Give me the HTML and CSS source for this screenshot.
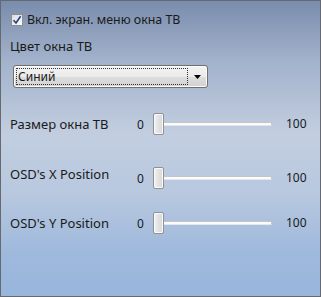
FILE: index.html
```html
<!DOCTYPE html>
<html lang="ru">
<head>
  <meta charset="UTF-8">
  <title>Настройки окна ТВ</title>
  <link rel="stylesheet" href="styles.css">
</head>
<body>

<div class="panel">
  <label class="check-row">
    <span class="checkbox">
      <svg width="10" height="10" viewBox="0 0 10 10"><path d="M1.5 5.2 L4 8 L8.6 1.2" fill="none" stroke="#2b3a8c" stroke-width="1.6"/></svg>
    </span>
    <span class="check-text">Вкл. экран. меню окна ТВ</span>
  </label>

  <div class="color-label">Цвет окна ТВ</div>

  <div class="select">
    <div class="select-focus">Синий</div>
    <div class="select-arrow">
      <svg width="7" height="4" viewBox="0 0 7 4"><path d="M0 0 H7 L3.5 4 Z" fill="#000"/></svg>
    </div>
  </div>

  <div class="slider-row row-size">
    <div class="slider-label">Размер окна ТВ</div>
    <div class="min">0</div>
    <div class="slider"><div class="track"></div><div class="thumb"></div></div>
    <div class="max">100</div>
  </div>

  <div class="slider-row row-x">
    <div class="slider-label">OSD's X Position</div>
    <div class="min">0</div>
    <div class="slider"><div class="track"></div><div class="thumb"></div></div>
    <div class="max">100</div>
  </div>

  <div class="slider-row row-y">
    <div class="slider-label">OSD's Y Position</div>
    <div class="min">0</div>
    <div class="slider"><div class="track"></div><div class="thumb"></div></div>
    <div class="max">100</div>
  </div>
</div>

</body>
</html>
```

FILE: styles.css
```css
body {
  margin: 0;
}
.panel {
  width: 321px;
  height: 297px;
  box-sizing: border-box;
  border: 1px solid #666a70;
  padding-left: 9px;
  font-family: "Noto Sans", sans-serif;
  font-size: 13px;
  line-height: 16px;
  color: #1a1a1a;
  background: linear-gradient(to bottom, #7a8cad 0%, #a2b2cb 20%, #c2cee0 45%, #b8c8df 65%, #9fb9dc 85%, #98b5dc 100%);
}
.check-row {
  display: flex;
  align-items: center;
  gap: 4px;
  height: 13px;
  margin-top: 12px;
}
.check-text {
  font-size: 12.4px;
}
.checkbox {
  width: 10px;
  height: 10px;
  margin-left: 1px;
  border: 1px solid #8e8f8f;
  background: linear-gradient(135deg, #dcdcdc, #fdfdfd);
  display: flex;
  align-items: center;
  justify-content: center;
}
.color-label {
  margin-top: 12px;
}
.select {
  display: flex;
  width: 195px;
  height: 23px;
  box-sizing: border-box;
  margin: 11px 0 0 3px;
  padding: 2px;
  border: 1px solid #707070;
  border-radius: 3px;
  font-size: 12px;
  background: linear-gradient(to bottom, #f3f3f3 0%, #ebebeb 50%, #dedede 50%, #d2d2d2 100%);
  box-shadow: inset 0 0 0 1px #fbfbfb;
}
.select-focus {
  width: 172px;
  height: 17px;
  box-sizing: border-box;
  border: 1px dotted #333;
  padding-left: 1px;
  line-height: 15px;
}
.select-arrow {
  flex: 1;
  display: flex;
  align-items: center;
  justify-content: center;
  padding-left: 2px;
}
.slider-row {
  display: flex;
  align-items: center;
  height: 22px;
}
.row-size { margin-top: 25px; }
.row-x { margin-top: 32px; }
.row-y { margin-top: 23px; }
.row-x .slider-label { margin-bottom: 9px; }
.slider-label {
  width: 127px;
}
.min {
  width: 16px;
  padding-top: 2px;
  font-size: 12px;
}
.slider {
  position: relative;
  width: 119px;
  height: 22px;
  display: flex;
  align-items: center;
}
.track {
  flex: 1;
  height: 2px;
  border: 1px solid #c2c6cc;
  border-bottom-color: #e4e6e9;
  background: #fbfbfb;
}
.thumb {
  position: absolute;
  left: 0;
  top: 0;
  width: 11px;
  height: 22px;
  box-sizing: border-box;
  border: 1px solid #8f9295;
  border-radius: 2px;
  background: linear-gradient(to right, #f2f2f2, #e2e2e2 50%, #d9d9d9);
  box-shadow: inset 0 0 0 1px #fafafa;
}
.max {
  margin-left: 14px;
  font-size: 12px;
}
```
